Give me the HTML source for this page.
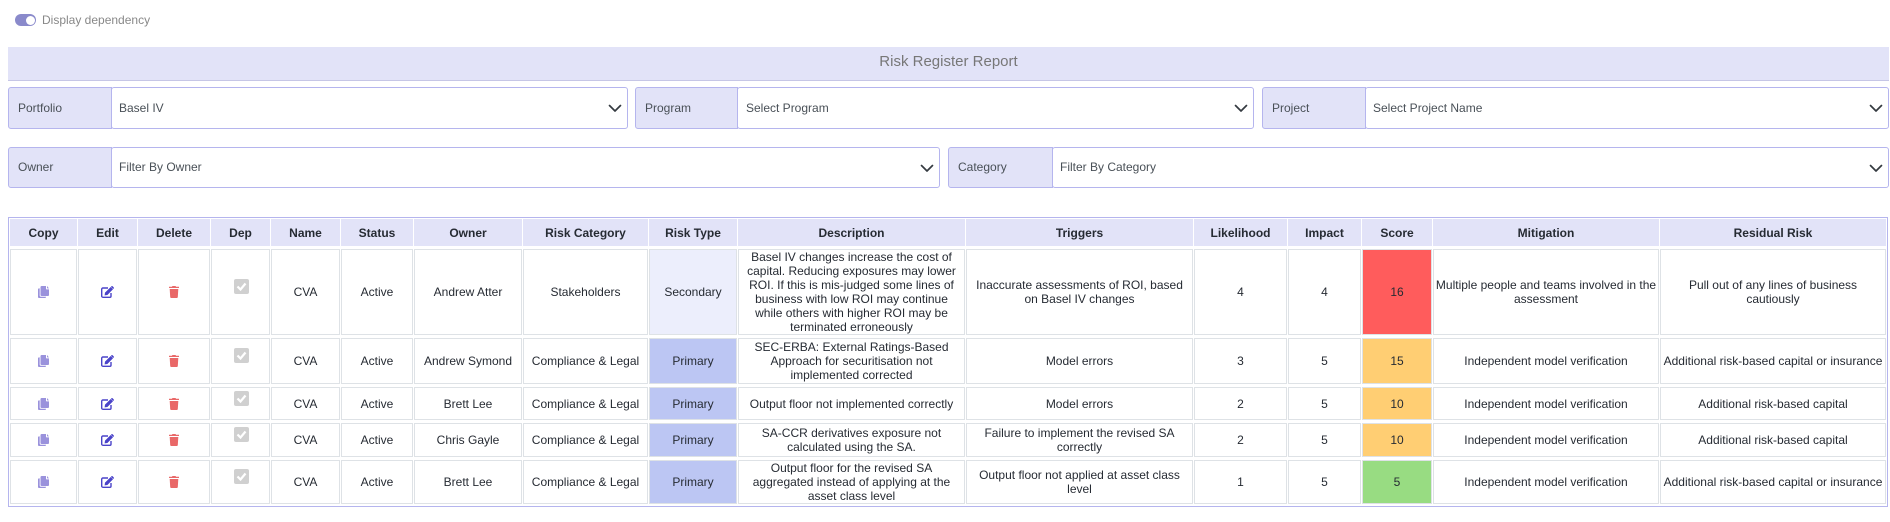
<!DOCTYPE html>
<html><head><meta charset="utf-8"><title>Risk Register Report</title>
<style>
*{box-sizing:border-box}
html,body{margin:0;padding:0;background:#fff;width:1890px;height:522px;overflow:hidden;font-family:"Liberation Sans",Arial,sans-serif;font-size:12px;color:#212529}
.tog{position:absolute;left:15px;top:14px;width:21px;height:12px;border-radius:6px;background:#8a8acb}
.tog i{position:absolute;right:1px;top:1.5px;width:9px;height:9px;border-radius:50%;background:#fff}
.togl{position:absolute;left:42px;top:13px;line-height:14px;color:#888}
.title{position:absolute;left:8px;top:47px;width:1881px;height:34px;background:#e2e3f8;border-bottom:1px solid #c6c6e6;text-align:center;font-size:15px;line-height:30px;color:#777}
.f{position:absolute;display:flex;color:#495057}
.f b{font-weight:normal;background:#e2e3f8;border:1px solid #b5b5ee;border-radius:3px 0 0 3px;padding-left:9px;height:100%;display:flex;align-items:center}
.f span{flex:1;display:flex;align-items:center;background:#fff;border:1px solid #b5b5ee;margin-left:-1px;border-radius:3px;padding-left:7px;position:relative}
.f.low b,.f.low span{padding-bottom:2px}
.f svg{position:absolute;right:4px;top:50%;margin-top:-8px;width:16px;height:16px}
.wrap{position:absolute;left:8px;top:217px;width:1880px;height:290px;border:1px solid #b5b5ee;overflow:hidden}
table{position:absolute;left:0;top:-2px;table-layout:fixed;width:1878px;border-collapse:separate;border-spacing:1px 3px}
th,td{padding:0 1px;text-align:center;vertical-align:middle;line-height:14px;font-size:12px}
th{background:#e2e3f8;font-weight:bold;height:27px;color:#262b33;border:1px solid #e2e3f8}
td{border:1px solid #dee2e6;background:#fff;position:relative;color:#262b33}
.r1{height:86px}.r2{height:46px}.r3{height:33px}.r4{height:34px}.r5{height:44px}
.sec{background:#eceefc}.pri{background:#bcc6f3}
.red{background:#ff5c5c}.org{background:#ffce73}.grn{background:#98dc82}
.ic{display:block;margin:auto}
.ck{position:absolute;left:22px;top:50%;margin-top:-13px;width:15px;height:15px;background:#d0d0d0;border-radius:2px}
.ck svg{display:block;width:15px;height:15px}
</style></head><body>
<svg width="0" height="0" style="position:absolute">
<defs>
<symbol id="cp" viewBox="0 0 11 12"><path fill="#9a92dc" d="M3.500 0H8v2.700c0 .4.300.7.700.7H11V9c0 .5-.4 1-1 1H3.500c-.5 0-1-.5-1-1V1c0-.5.500-1 1-1zM9 0l2 2.400H9zM1 2.400h.7V9.600c0 .6.500 1.100 1.100 1.100H8V11c0 .6-.4 1-1 1H1c-.6 0-1-.4-1-1V3.400c0-.6.400-1 1-1z"/></symbol>
<symbol id="ed" viewBox="0 0 13 12"><path fill="none" stroke="#4a43c9" stroke-width="1.400" d="M10 7v3.100c0 .6-.4 1.200-1 1.200H1.900c-.6 0-1.200-.6-1.200-1.200V3.200c0-.6.600-1.200 1.200-1.200H7"/><path fill="#4a43c9" d="M4 6.600 9.700 1l2.300 2.300L6.400 9 3.600 9.400zM10.500.3c.3-.4.800-.4 1.100 0l1.100 1.100c.3.300.3.800 0 1.100l-.5.500-2.300-2.300z"/></symbol>
<symbol id="tr" viewBox="0 0 10 12"><path fill="#e96868" d="M3.400 0h3.200l.4.800H10V2H0V.8h3zM.7 3h8.600l-.5 8c0 .6-.5 1-1 1H2.200c-.5 0-1-.4-1-1z"/></symbol>
<symbol id="chv" viewBox="0 0 16 16"><path fill="none" stroke="#343a40" stroke-width="1.700" stroke-linecap="round" stroke-linejoin="round" d="M2.500 5.500l5.500 5.500 5.500-5.500"/></symbol>
<symbol id="chk" viewBox="0 0 15 15"><path fill="none" stroke="#fff" stroke-width="2.200" d="M3.500 7.500l3 3 5-6"/></symbol>
</defs></svg>

<div class="tog"><i></i></div><div class="togl">Display dependency</div>
<div class="title">Risk Register Report</div>

<div class="f" style="left:8px;top:87px;width:620px;height:42px"><b style="width:104px">Portfolio</b><span>Basel IV<svg><use href="#chv"/></svg></span></div>
<div class="f" style="left:635px;top:87px;width:619px;height:42px"><b style="width:103px">Program</b><span style="padding-left:8px">Select Program<svg><use href="#chv"/></svg></span></div>
<div class="f" style="left:1262px;top:87px;width:627px;height:42px"><b style="width:104px">Project</b><span>Select Project Name<svg><use href="#chv"/></svg></span></div>
<div class="f low" style="left:8px;top:147px;width:932px;height:41px"><b style="width:104px">Owner</b><span>Filter By Owner<svg><use href="#chv"/></svg></span></div>
<div class="f low" style="left:948px;top:147px;width:941px;height:41px"><b style="width:105px">Category</b><span>Filter By Category<svg><use href="#chv"/></svg></span></div>

<div class="wrap"><table>
<colgroup><col style="width:67px"><col style="width:59px"><col style="width:72px"><col style="width:59px"><col style="width:69px"><col style="width:72px"><col style="width:108px"><col style="width:125px"><col style="width:88px"><col style="width:227px"><col style="width:227px"><col style="width:93px"><col style="width:73px"><col style="width:70px"><col style="width:226px"><col style="width:226px"></colgroup>
<tr><th>Copy</th><th>Edit</th><th>Delete</th><th>Dep</th><th>Name</th><th>Status</th><th>Owner</th><th>Risk Category</th><th>Risk Type</th><th>Description</th><th>Triggers</th><th>Likelihood</th><th>Impact</th><th>Score</th><th>Mitigation</th><th>Residual Risk</th></tr>

<tr class="r1"><td><svg class="ic" width="11" height="12"><use href="#cp"/></svg></td><td><svg class="ic" width="13" height="12"><use href="#ed"/></svg></td><td><svg class="ic" width="10" height="12"><use href="#tr"/></svg></td><td><div class="ck"><svg><use href="#chk"/></svg></div></td><td>CVA</td><td>Active</td><td>Andrew Atter</td><td>Stakeholders</td><td class="sec">Secondary</td><td>Basel IV changes increase the cost of<br>capital. Reducing exposures may lower<br>ROI. If this is mis-judged some lines of<br>business with low ROI may continue<br>while others with higher ROI may be<br>terminated erroneously</td><td>Inaccurate assessments of ROI, based<br>on Basel IV changes</td><td>4</td><td>4</td><td class="red">16</td><td>Multiple people and teams involved in the<br>assessment</td><td>Pull out of any lines of business<br>cautiously</td></tr>

<tr class="r2"><td><svg class="ic" width="11" height="12"><use href="#cp"/></svg></td><td><svg class="ic" width="13" height="12"><use href="#ed"/></svg></td><td><svg class="ic" width="10" height="12"><use href="#tr"/></svg></td><td><div class="ck"><svg><use href="#chk"/></svg></div></td><td>CVA</td><td>Active</td><td>Andrew Symond</td><td>Compliance &amp; Legal</td><td class="pri">Primary</td><td>SEC-ERBA: External Ratings-Based<br>Approach for securitisation not<br>implemented corrected</td><td>Model errors</td><td>3</td><td>5</td><td class="org">15</td><td>Independent model verification</td><td>Additional risk-based capital or insurance</td></tr>

<tr class="r3"><td><svg class="ic" width="11" height="12"><use href="#cp"/></svg></td><td><svg class="ic" width="13" height="12"><use href="#ed"/></svg></td><td><svg class="ic" width="10" height="12"><use href="#tr"/></svg></td><td><div class="ck"><svg><use href="#chk"/></svg></div></td><td>CVA</td><td>Active</td><td>Brett Lee</td><td>Compliance &amp; Legal</td><td class="pri">Primary</td><td>Output floor not implemented correctly</td><td>Model errors</td><td>2</td><td>5</td><td class="org">10</td><td>Independent model verification</td><td>Additional risk-based capital</td></tr>

<tr class="r4"><td><svg class="ic" width="11" height="12"><use href="#cp"/></svg></td><td><svg class="ic" width="13" height="12"><use href="#ed"/></svg></td><td><svg class="ic" width="10" height="12"><use href="#tr"/></svg></td><td><div class="ck"><svg><use href="#chk"/></svg></div></td><td>CVA</td><td>Active</td><td>Chris Gayle</td><td>Compliance &amp; Legal</td><td class="pri">Primary</td><td>SA-CCR derivatives exposure not<br>calculated using the SA.</td><td>Failure to implement the revised SA<br>correctly</td><td>2</td><td>5</td><td class="org">10</td><td>Independent model verification</td><td>Additional risk-based capital</td></tr>

<tr class="r5"><td><svg class="ic" width="11" height="12"><use href="#cp"/></svg></td><td><svg class="ic" width="13" height="12"><use href="#ed"/></svg></td><td><svg class="ic" width="10" height="12"><use href="#tr"/></svg></td><td><div class="ck"><svg><use href="#chk"/></svg></div></td><td>CVA</td><td>Active</td><td>Brett Lee</td><td>Compliance &amp; Legal</td><td class="pri">Primary</td><td>Output floor for the revised SA<br>aggregated instead of applying at the<br>asset class level</td><td>Output floor not applied at asset class<br>level</td><td>1</td><td>5</td><td class="grn">5</td><td>Independent model verification</td><td>Additional risk-based capital or insurance</td></tr>
</table></div>
</body></html>
